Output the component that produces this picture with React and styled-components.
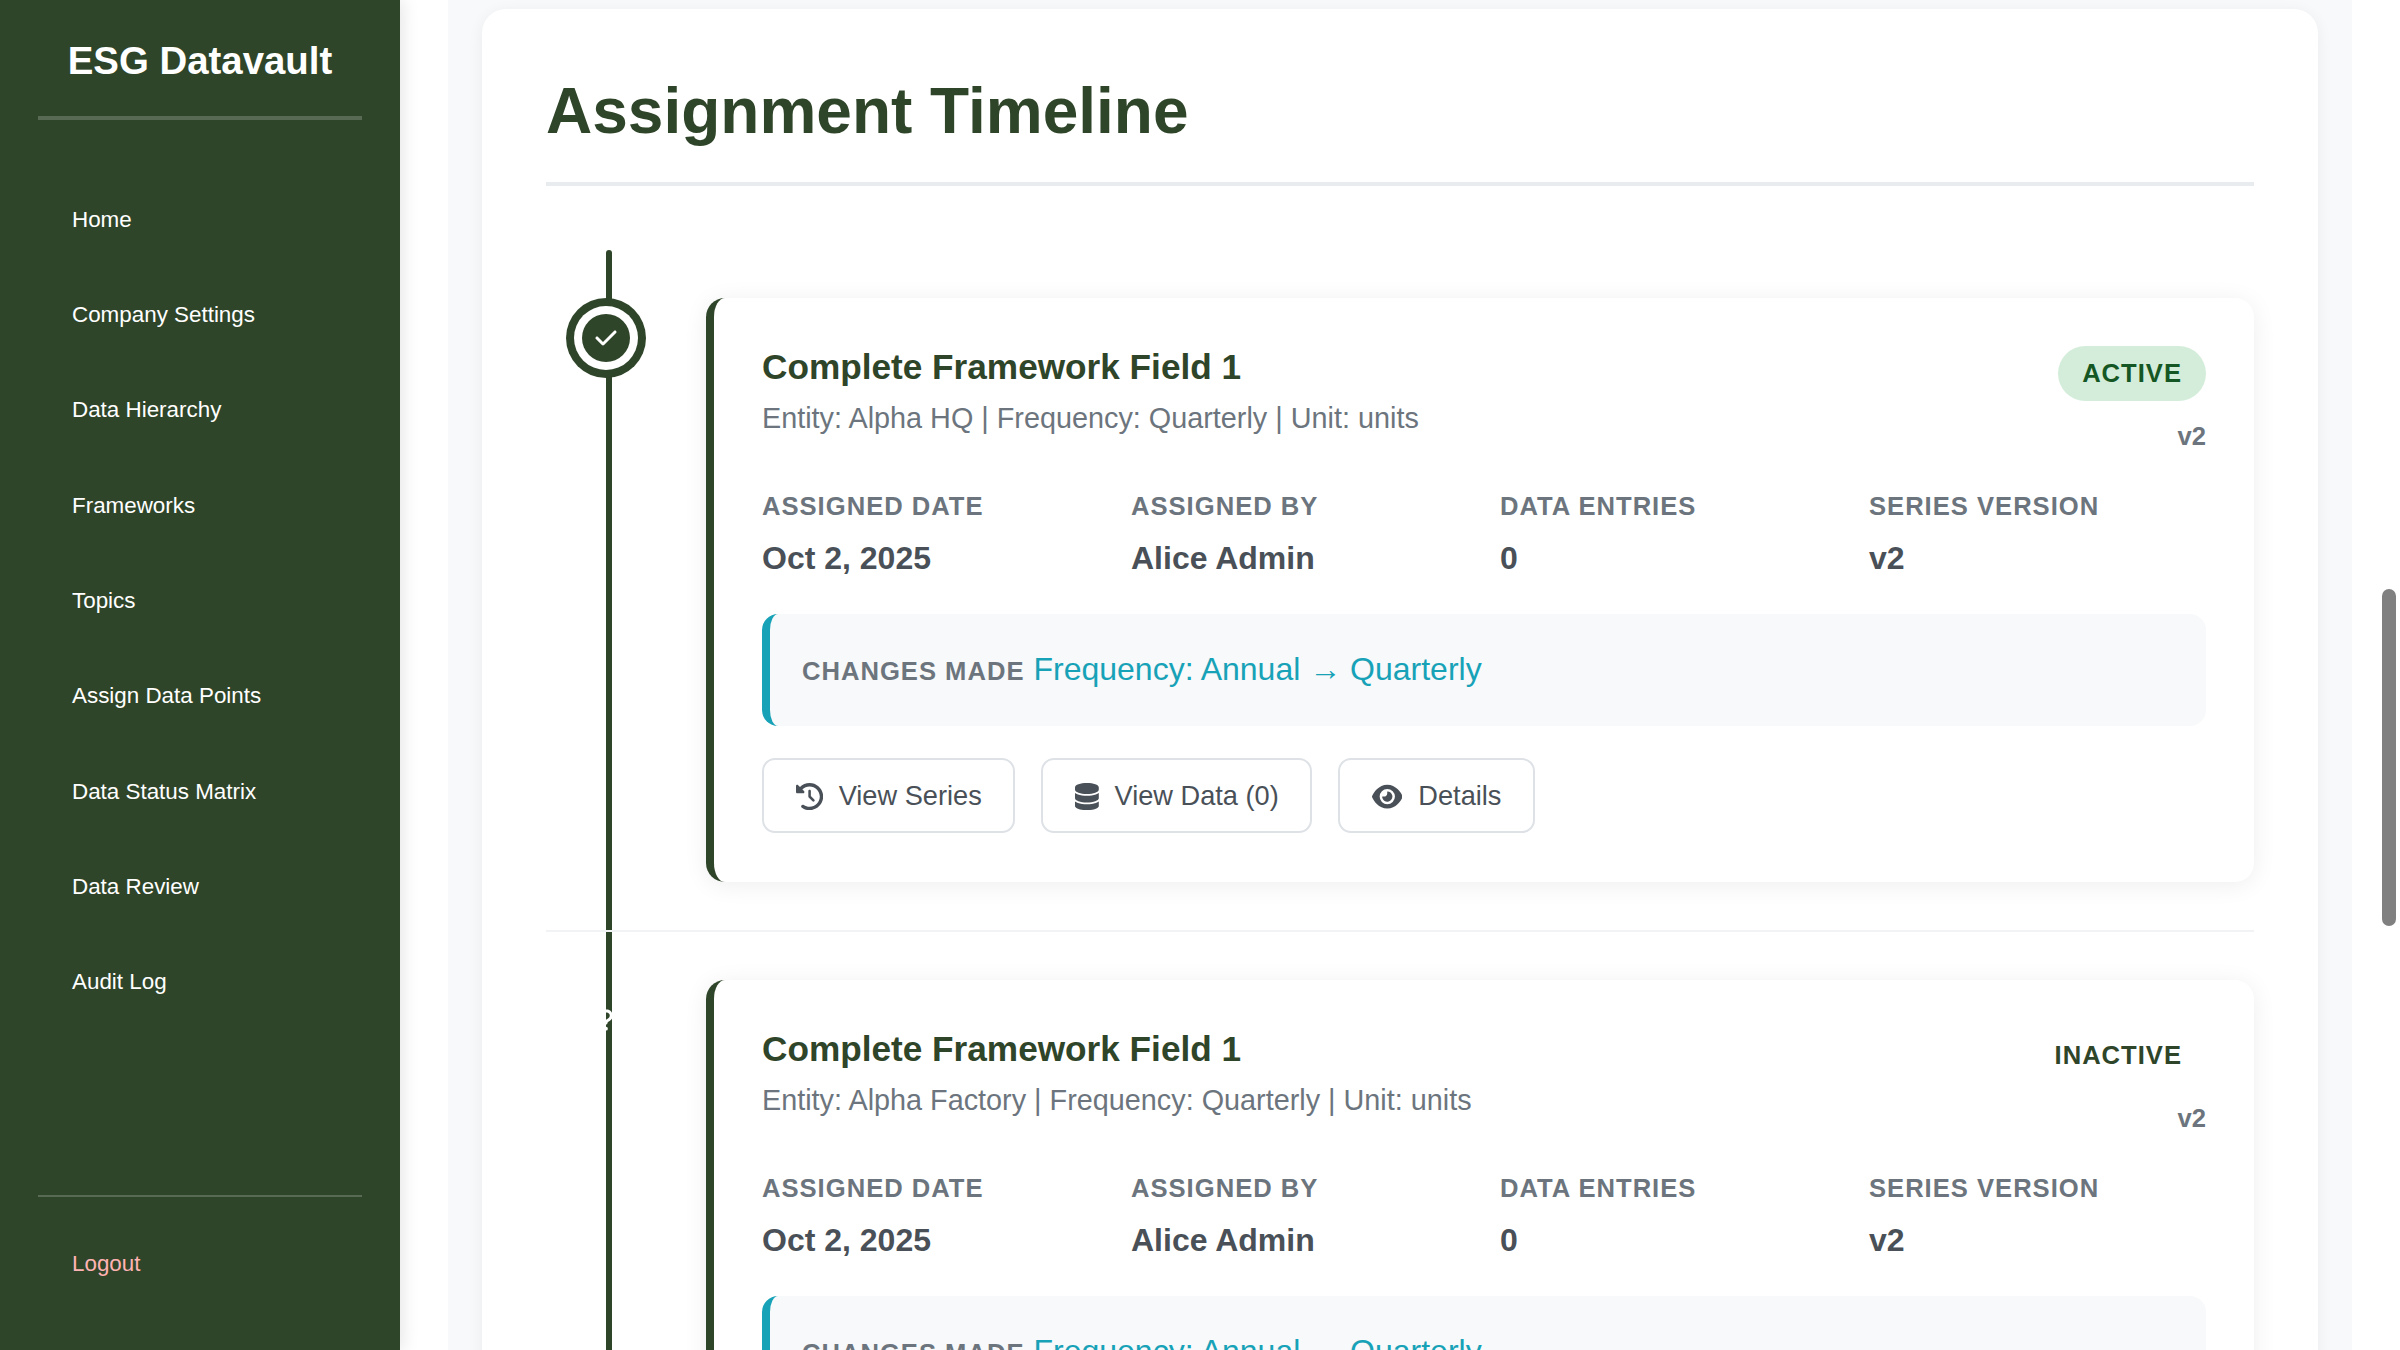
import React from "react";
import styled, { createGlobalStyle } from "styled-components";
import { FaClockRotateLeft, FaDatabase, FaEye, FaCheck, FaQuestion } from "react-icons/fa6";

const Global = createGlobalStyle`
  html, body { margin: 0; padding: 0; height: 1350px; overflow: hidden; background: #fff; }
  * { box-sizing: border-box; }
  body { font-family: "Liberation Sans", Arial, sans-serif; }
`;

const Page = styled.div`
  display: flex;
  position: relative;
  width: 2400px;
  height: 1350px;
  overflow: hidden;
`;

const Sidebar = styled.aside`
  width: 400px;
  flex: none;
  height: 1350px;
  background: #2f4529;
  box-shadow: 3px 0 16px rgba(0, 0, 0, 0.1);
  display: flex;
  flex-direction: column;
  padding: 0 38px;
  position: relative;
  z-index: 2;
`;

const Brand = styled.div`
  height: 120px;
  padding-top: 39px;
  border-bottom: 4px solid rgba(255, 255, 255, 0.2);
  color: #fff;
  font-size: 38.4px;
  font-weight: 700;
  line-height: 44px;
  text-align: center;
`;

const Nav = styled.nav`
  display: flex;
  flex-direction: column;
  padding-top: 51.8px;
  flex: 1;
`;

const NavLink = styled.a`
  display: block;
  height: 95.3px;
  padding-left: 34px;
  line-height: 95.3px;
  color: #fff;
  font-size: 22.4px;
`;

const Footer = styled.div`
  border-top: 2px solid rgba(255, 255, 255, 0.2);
  height: 155px;
  padding: 21px 0 0 34px;
`;

const Logout = styled.a`
  display: block;
  color: #ffb3b3;
  font-size: 22.4px;
  line-height: 92px;
`;

const Main = styled.main`
  flex: 1;
  height: 1350px;
  padding: 0 48px;
  background: #fff;
  overflow: hidden;
`;

const Content = styled.div`
  height: 1350px;
  background: #f8f9fa;
  padding: 9px 0 0 34px;
  overflow: hidden;
`;

const Panel = styled.section`
  width: 1836px;
  background: #fff;
  border-radius: 24px;
  box-shadow: 0 3px 16px rgba(0, 0, 0, 0.06);
  padding: 64px 64px 0;
  min-height: 1500px;
`;

const Title = styled.h1`
  margin: 0 0 64px;
  padding-bottom: 31px;
  border-bottom: 4px solid #e9ecef;
  color: #2f4529;
  font-size: 64px;
  font-weight: 700;
  line-height: 77.8px;
`;

const Timeline = styled.div`
  position: relative;
  &::before {
    content: "";
    position: absolute;
    left: 60px;
    top: 0;
    bottom: 0;
    width: 6px;
    border-radius: 3px;
    background: #2f4529;
  }
`;

const Item = styled.article`
  position: relative;
  padding: 48px 0 48px 160px;
  border-bottom: 2px solid #f1f3f5;
`;

const Dot = styled.span`
  position: absolute;
  left: 36px;
  top: 64px;
  width: 48px;
  height: 48px;
  border-radius: 50%;
  display: flex;
  align-items: center;
  justify-content: center;
  color: #fff;
  font-size: 24px;
  background: ${(p) => (p.$active ? "#2f4529" : "transparent")};
  box-shadow: ${(p) => (p.$active ? "0 0 0 8px #fff, 0 0 0 16px #2f4529" : "none")};
`;

const Card = styled.div`
  border-left: 8px solid #2f4529;
  border-radius: 19px;
  background: #fff;
  box-shadow: 0 3px 24px rgba(0, 0, 0, 0.07);
  padding: 48px 48px 49px;
`;

const CardHead = styled.header`
  display: flex;
  justify-content: space-between;
  align-items: flex-start;
  height: 130px;
`;

const CardTitle = styled.h3`
  margin: 0;
  color: #2f4529;
  font-size: 35.2px;
  font-weight: 700;
  line-height: 42px;
`;

const CardSub = styled.p`
  margin: 13px 0 0;
  color: #6c757d;
  font-size: 28.8px;
  line-height: 34px;
`;

const Side = styled.div`
  display: flex;
  flex-direction: column;
  align-items: flex-end;
`;

const Status = styled.span`
  height: 55px;
  padding: 0 24px;
  border-radius: 28px;
  line-height: 54px;
  font-size: 25.6px;
  font-weight: 700;
  letter-spacing: 1px;
  background: ${(p) => (p.$active ? "#d4edda" : "transparent")};
  color: ${(p) => (p.$active ? "#155724" : "#2f4529")};
`;

const Version = styled.span`
  margin-top: 20px;
  color: #6c757d;
  font-size: 25.6px;
  font-weight: 700;
  line-height: 30px;
`;

const Meta = styled.div`
  display: grid;
  grid-template-columns: repeat(4, 1fr);
  gap: 32px;
  margin-top: 15px;
`;

const MetaLabel = styled.div`
  color: #6c757d;
  font-size: 25.6px;
  font-weight: 700;
  letter-spacing: 1px;
  line-height: 30px;
`;

const MetaValue = styled.div`
  margin-top: 18px;
  color: #495057;
  font-size: 32px;
  font-weight: 700;
  line-height: 38px;
`;

const Changes = styled.div`
  margin-top: 37px;
  height: 112px;
  padding: 0 32px;
  border-left: 8px solid #17a2b8;
  border-radius: 16px;
  background: #f8f9fa;
  display: flex;
  align-items: baseline;
  line-height: 110px;
  gap: 9px;
`;

const ChangesLabel = styled.span`
  color: #6c757d;
  font-size: 25.6px;
  font-weight: 700;
  letter-spacing: 1px;
`;

const ChangesText = styled.span`
  color: #17a2b8;
  font-size: 32px;
`;

const Actions = styled.div`
  display: flex;
  gap: 26px;
  margin-top: 32px;
`;

const Button = styled.button`
  height: 75px;
  padding: 2px 31.5px 0;
  border: 2.5px solid #dee2e6;
  border-radius: 13px;
  background: #fff;
  color: #495057;
  font-family: inherit;
  font-size: 27.2px;
  display: flex;
  align-items: center;
  gap: 16px;
  svg {
    height: 27.2px;
    width: ${(p) => p.$iconWidth}px;
    flex: none;
  }
`;

const Thumb = styled.div`
  position: absolute;
  left: 2382px;
  top: 589px;
  width: 14px;
  height: 337px;
  border-radius: 7px;
  background: #808080;
`;

const links = [
  "Home",
  "Company Settings",
  "Data Hierarchy",
  "Frameworks",
  "Topics",
  "Assign Data Points",
  "Data Status Matrix",
  "Data Review",
  "Audit Log",
];

const items = [
  { entity: "Alpha HQ", active: true },
  { entity: "Alpha Factory", active: false },
];

export default function App() {
  return (
    <Page>
      <Global />
      <Sidebar>
        <Brand>ESG Datavault</Brand>
        <Nav>
          {links.map((l) => (
            <NavLink key={l}>{l}</NavLink>
          ))}
        </Nav>
        <Footer>
          <Logout>Logout</Logout>
        </Footer>
      </Sidebar>
      <Main>
        <Content>
          <Panel>
            <Title>Assignment Timeline</Title>
            <Timeline>
              {items.map((it) => (
                <Item key={it.entity}>
                  <Dot $active={it.active}>
                    {it.active ? <FaCheck /> : <FaQuestion />}
                  </Dot>
                  <Card>
                    <CardHead>
                      <div>
                        <CardTitle>Complete Framework Field 1</CardTitle>
                        <CardSub>
                          Entity: {it.entity} | Frequency: Quarterly | Unit: units
                        </CardSub>
                      </div>
                      <Side>
                        <Status $active={it.active}>
                          {it.active ? "ACTIVE" : "INACTIVE"}
                        </Status>
                        <Version>v2</Version>
                      </Side>
                    </CardHead>
                    <Meta>
                      <div>
                        <MetaLabel>ASSIGNED DATE</MetaLabel>
                        <MetaValue>Oct 2, 2025</MetaValue>
                      </div>
                      <div>
                        <MetaLabel>ASSIGNED BY</MetaLabel>
                        <MetaValue>Alice Admin</MetaValue>
                      </div>
                      <div>
                        <MetaLabel>DATA ENTRIES</MetaLabel>
                        <MetaValue>0</MetaValue>
                      </div>
                      <div>
                        <MetaLabel>SERIES VERSION</MetaLabel>
                        <MetaValue>v2</MetaValue>
                      </div>
                    </Meta>
                    <Changes>
                      <ChangesLabel>CHANGES MADE</ChangesLabel>
                      <ChangesText>Frequency: Annual → Quarterly</ChangesText>
                    </Changes>
                    <Actions>
                      <Button $iconWidth={27.2}>
                        <FaClockRotateLeft />
                        View Series
                      </Button>
                      <Button $iconWidth={23.8}>
                        <FaDatabase />
                        View Data (0)
                      </Button>
                      <Button $iconWidth={30.6}>
                        <FaEye />
                        Details
                      </Button>
                    </Actions>
                  </Card>
                </Item>
              ))}
            </Timeline>
          </Panel>
        </Content>
      </Main>
      <Thumb />
    </Page>
  );
}
